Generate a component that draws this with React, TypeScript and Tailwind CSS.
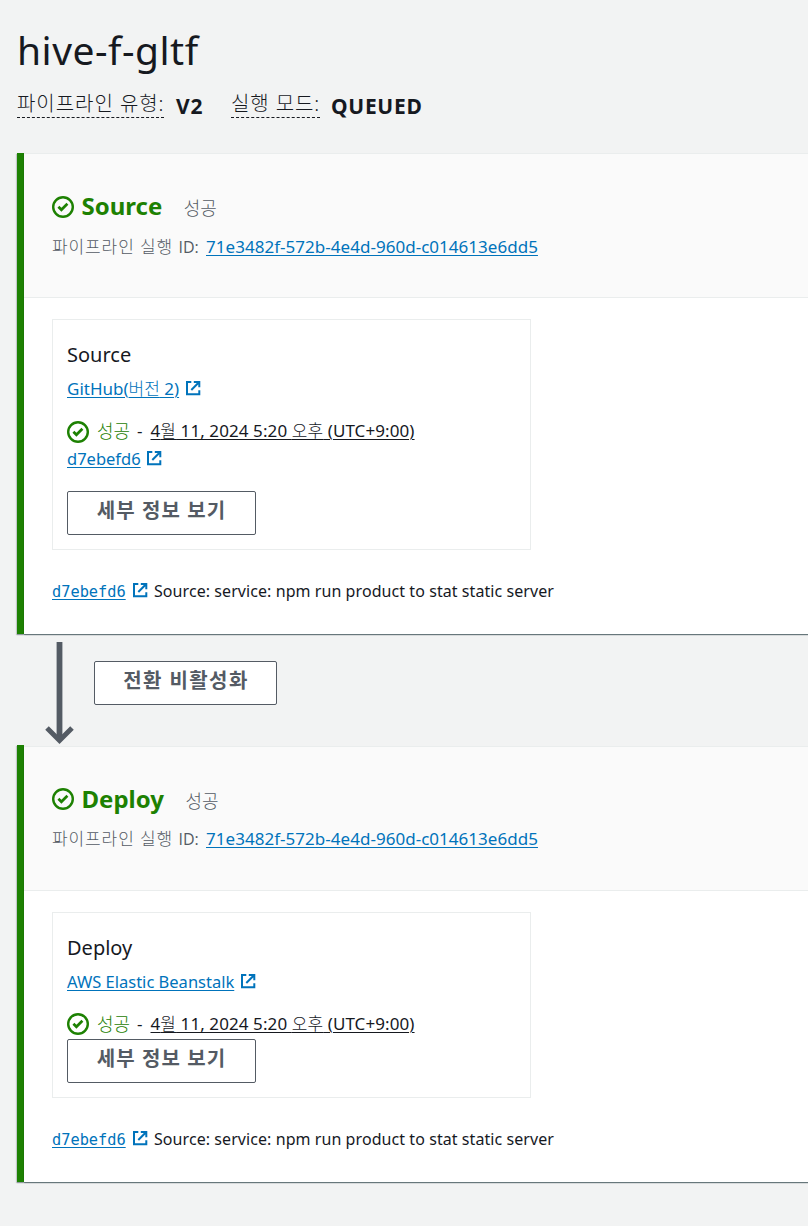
import React from 'react';
import type { ReactNode } from 'react';

const EXECUTION_ID = '71e3482f-572b-4e4d-960d-c014613e6dd5';

function CheckIcon() {
  return (
    <svg className="h-[22px] w-[22px] shrink-0" viewBox="0 0 22 22" fill="none" stroke="#1d8102">
      <circle cx="11" cy="11" r="9.8" strokeWidth="2.4" />
      <path d="M6.4 10.8 9.4 13.8 15.4 7.8" strokeWidth="2.7" />
    </svg>
  );
}

function ExternalIcon() {
  return (
    <svg className="h-[15px] w-[15px] shrink-0" viewBox="0 0 15 15" fill="none" stroke="#0073bb" strokeWidth="2">
      <path d="M5.3 1H1v12.3h12.3V9.3" />
      <path d="M7.8 1h5.5v5.3M13 1.3 5.3 9" />
    </svg>
  );
}

function Light({ children }: { children: ReactNode }) {
  return <span className="font-light">{children}</span>;
}

function Link({ className = '', children }: { className?: string; children: ReactNode }) {
  return (
    <a
      href="#"
      className={`whitespace-nowrap text-[#0073bb] underline decoration-1 underline-offset-2 ${className}`}
    >
      {children}
    </a>
  );
}

function Button({ className = '', children }: { className?: string; children: ReactNode }) {
  return (
    <button
      className={`block h-11 rounded-[2px] border border-[#545b64] bg-white pb-[4px] text-center text-[20px] leading-[38px] font-bold whitespace-nowrap text-[#545b64] ${className}`}
    >
      {children}
    </button>
  );
}

type StageProps = {
  name: string;
  provider: ReactNode;
  providerClass: string;
  revision?: string;
  panelClass?: string;
  iconClass?: string;
  idClass?: string;
};

function Stage({
  name,
  provider,
  providerClass,
  revision,
  panelClass = '',
  iconClass = '',
  idClass = 'mt-3',
}: StageProps) {
  return (
    <section className="flex">
      <div className="w-[7px] shrink-0 bg-[#1d8102] shadow-[0_1px_1px_0_rgba(0,28,36,0.3),-1px_1px_1px_0_rgba(0,28,36,0.15)]" />
      <div
        className={`grow bg-white shadow-[0_1px_1px_0_rgba(0,28,36,0.5),1px_1px_1px_0_rgba(0,28,36,0.15)] ${panelClass}`}
      >
        <header className="h-[145px] border-y border-[#eaeded] bg-[#fafafa] pt-9 pl-7">
          <div className="flex h-8 items-center">
            <div className={iconClass}>
              <CheckIcon />
            </div>
            <h2 className="ml-[7.5px] text-[24px] leading-8 font-bold text-[#1d8102]">{name}</h2>
            <span className="mt-[3px] ml-[21.5px] text-[18px] leading-8 font-light text-[#545b64]">성공</span>
          </div>
          <div className={`flex h-6 items-baseline text-[17px] leading-6 text-[#545b64] ${idClass}`}>
            <span className="w-[154px] whitespace-nowrap">
              <span className="font-light tracking-[0.9px]">파이프라인 실행 </span>
              <span className="font-['Open_Sans',sans-serif] text-[16px]">ID:</span>
            </span>
            <Link className="tracking-[0.03px]">{EXECUTION_ID}</Link>
          </div>
        </header>

        <div className="pt-[21px] pl-7">
          <div className="w-[479px] border border-[#eaeded] px-[14px] pt-5 pb-[14px]">
            <h3 className="text-[20px] leading-[30px]">{name}</h3>
            <div className="mt-[7px] flex h-6 items-center gap-[6.5px] leading-6">
              <Link className={providerClass}>{provider}</Link>
              <div className="mb-[2px]">
                <ExternalIcon />
              </div>
            </div>
            <div className="mt-[18px] flex h-6 items-center text-[17px] leading-6">
              <div className={revision ? 'mt-[2px]' : ''}>
                <CheckIcon />
              </div>
              <span className="mb-px ml-2 w-[40px] text-[18px] font-light text-[#1d8102]">성공</span>
              <span className="w-[13.5px]">-</span>
              <span className="tracking-[0.09px] whitespace-nowrap underline decoration-1 underline-offset-2">
                4<Light>월</Light> 11, 2024 5:20 <Light>오후</Light> (UTC+9:00)
              </span>
            </div>
            {revision ? (
              <div className="mt-1 mb-5 flex h-6 items-center gap-[6px] leading-6">
                <Link className="text-[16.5px]">{revision}</Link>
                <div className="mb-[2px]">
                  <ExternalIcon />
                </div>
              </div>
            ) : (
              <div className="h-[3px]" />
            )}
            <Button className="w-[189px] tracking-[1.1px]">세부 정보 보기</Button>
          </div>

          <div className="mt-[29px] mb-[31px] flex h-6 items-center leading-6">
            <Link className="mt-[2px] font-['DejaVu_Sans_Mono',monospace] text-[15.3px]">d7ebefd6</Link>
            <div className="mr-[6px] mb-[2px] ml-[7.3px]">
              <ExternalIcon />
            </div>
            <span className="text-[16px] tracking-[0.07px]">Source: service: npm run product to stat static server</span>
          </div>
        </div>
      </div>
    </section>
  );
}

export default function App() {
  return (
    <main className="h-[1226px] w-full overflow-hidden bg-[#f2f3f3] pl-[17px] font-['Noto_Sans','Noto_Sans_CJK_KR',sans-serif] text-[#16191f]">
      <h1 className="pt-[25px] text-[39px] leading-[50px] tracking-[0.5px]">hive-f-gltf</h1>
      <div className="mt-[13px] flex h-[30px] items-start text-[20px] font-light">
        <span className="h-[30px] w-[147px] border-b border-dashed border-[#16191f] leading-[32px] tracking-[0.95px] whitespace-nowrap">
          파이프라인 유형:
        </span>
        <span className="mt-[3px] ml-3 w-[55px] text-[21px] leading-[30px] font-bold tracking-[0.8px]">V2</span>
        <span className="h-[30px] w-[89px] border-b border-dashed border-[#16191f] leading-[32px] tracking-[0.9px] whitespace-nowrap">
          실행 모드:
        </span>
        <span className="mt-[3px] ml-[11px] text-[21px] leading-[30px] font-bold tracking-[0.7px]">QUEUED</span>
      </div>

      <div className="mt-[35px]">
        <Stage
          name="Source"
          provider={
            <>
              GitHub(<Light>버전</Light> 2)
            </>
          }
          providerClass="text-[17px]"
          revision="d7ebefd6"
          iconClass="mt-[2px]"
          idClass="mt-[13px]"
        />
      </div>

      <div className="flex h-[111px] pl-7">
        <svg className="mt-2 h-[103px] w-[30px]" viewBox="0 0 30 103" fill="none" stroke="#545b64">
          <path d="M14.5 0V98" strokeWidth="5.8" />
          <path d="M2 86 14.5 98.5 27 86" strokeWidth="5" />
        </svg>
        <Button className="mt-[27px] ml-[19px] w-[183px] pr-0 pl-px tracking-[1.4px]">전환 비활성화</Button>
      </div>

      <Stage name="Deploy" provider="AWS Elastic Beanstalk" providerClass="text-[16.5px]" panelClass="mt-px" />
    </main>
  );
}
